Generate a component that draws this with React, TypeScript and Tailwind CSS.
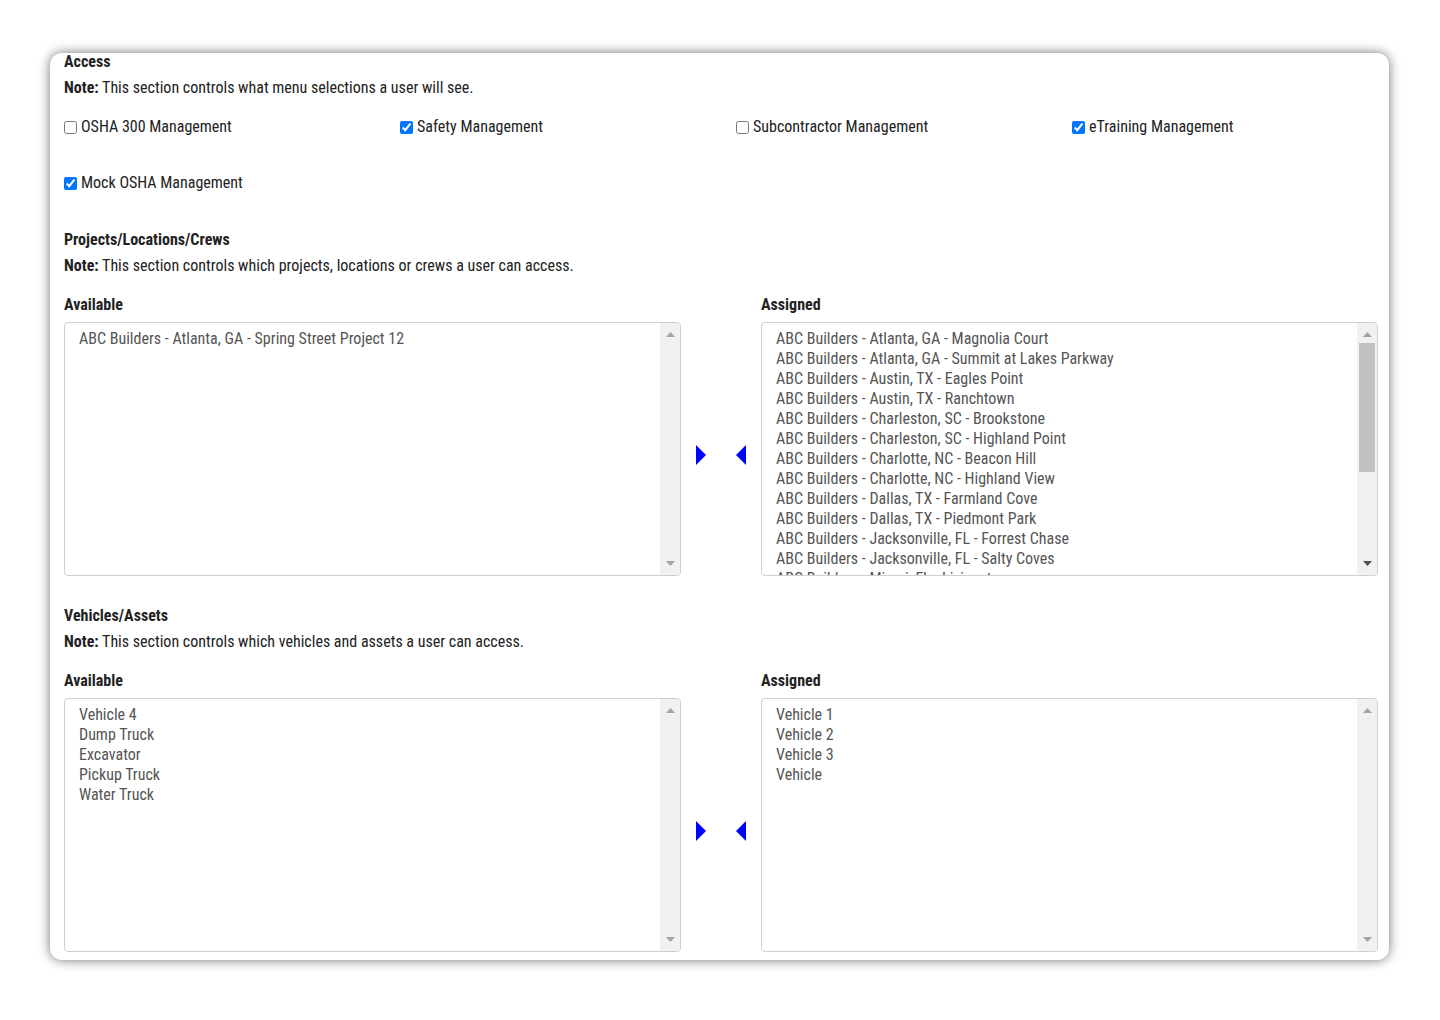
import React from "react";

const font = { fontFamily: "Roboto, 'Noto Sans', sans-serif" };

function Arrow({ dir }: { dir: "right" | "left" }) {
  return (
    <svg width="10" height="20" viewBox="0 0 10 20" className="block">
      {dir === "right" ? (
        <polygon points="0,0 10,10 0,20" fill="#0000ff" />
      ) : (
        <polygon points="10,0 0,10 10,20" fill="#0000ff" />
      )}
    </svg>
  );
}

function Scrollbar({ thumb }: { thumb: boolean }) {
  return (
    <div className="w-[20px] shrink-0 bg-[#f1f1f1] flex flex-col items-center">
      <div className="h-[20px] w-full flex items-center justify-center">
        <svg width="9" height="5" viewBox="0 0 9 5" className="mt-[2px]">
          <polygon points="0,5 4.5,0 9,5" fill="#a3a3a3" />
        </svg>
      </div>
      <div className="flex-1 w-full px-[2px]">
        {thumb && <div className="h-[129px] w-full bg-[#c1c1c1]" />}
      </div>
      <div className="h-[24px] w-full flex items-center justify-center">
        <svg width="9" height="5" viewBox="0 0 9 5">
          <polygon points="0,0 4.5,5 9,0" fill={thumb ? "#505050" : "#a3a3a3"} />
        </svg>
      </div>
    </div>
  );
}

function ListBox({ items, thumb = false }: { items: string[]; thumb?: boolean }) {
  return (
    <div className="h-[254px] border border-[#cfcfcf] rounded-[4px] bg-white flex overflow-hidden">
      <div className="flex-1 overflow-hidden pl-[14px] pt-[6px] text-[#555555]">
        {items.map((it) => (
          <div key={it} className="h-[20px] leading-[20px] whitespace-nowrap">
            {it}
          </div>
        ))}
      </div>
      <Scrollbar thumb={thumb} />
    </div>
  );
}

function Check({ label, checked }: { label: string; checked: boolean }) {
  return (
    <label className="flex items-center gap-[4px] h-[20px] leading-[20px]">
      <input
        type="checkbox"
        defaultChecked={checked}
        className="w-[13px] h-[13px] m-0"
      />
      <span>{label}</span>
    </label>
  );
}

function Transfer({
  left,
  right,
  thumb,
}: {
  left: string[];
  right: string[];
  thumb: boolean;
}) {
  return (
    <>
      <div className="grid grid-cols-[617px_80px_617px] mt-[19px] font-bold text-[#222222] leading-[20px]">
        <div>Available</div>
        <div />
        <div>Assigned</div>
      </div>
      <div className="grid grid-cols-[617px_80px_617px] mt-[7px]">
        <ListBox items={left} />
        <div className="flex items-center justify-center gap-[30px] pt-[12px]">
          <Arrow dir="right" />
          <Arrow dir="left" />
        </div>
        <ListBox items={right} thumb={thumb} />
      </div>
    </>
  );
}

export default function App() {
  const assigned = [
    "ABC Builders - Atlanta, GA - Magnolia Court",
    "ABC Builders - Atlanta, GA - Summit at Lakes Parkway",
    "ABC Builders - Austin, TX - Eagles Point",
    "ABC Builders - Austin, TX - Ranchtown",
    "ABC Builders - Charleston, SC - Brookstone",
    "ABC Builders - Charleston, SC - Highland Point",
    "ABC Builders - Charlotte, NC - Beacon Hill",
    "ABC Builders - Charlotte, NC - Highland View",
    "ABC Builders - Dallas, TX - Farmland Cove",
    "ABC Builders - Dallas, TX - Piedmont Park",
    "ABC Builders - Jacksonville, FL - Forrest Chase",
    "ABC Builders - Jacksonville, FL - Salty Coves",
    "ABC Builders - Miami, FL - Livingston",
    "ABC Builders - Miami, FL - Palm Grove",
  ];
  return (
    <div
      className="min-h-screen bg-white pt-[53px] pl-[50px] text-[16px] font-stretch-condensed text-[#222222]"
      style={font}
    >
      <div className="w-[1339px] h-[907px] rounded-[12px] bg-white shadow-[0_0_12px_rgba(0,0,0,0.55)] overflow-hidden px-[14px]">
        <div className="-mt-[1px] font-bold leading-[20px]">Access</div>
        <div className="mt-[6px] leading-[20px]">
          <b>Note:</b> This section controls what menu selections a user will see.
        </div>
        <div className="grid grid-cols-[repeat(4,336px)] gap-y-[36px] mt-[19px]">
          <Check label="OSHA 300 Management" checked={false} />
          <Check label="Safety Management" checked={true} />
          <Check label="Subcontractor Management" checked={false} />
          <Check label="eTraining Management" checked={true} />
          <Check label="Mock OSHA Management" checked={true} />
        </div>

        <div className="mt-[37px] font-bold leading-[20px]">Projects/Locations/Crews</div>
        <div className="mt-[6px] leading-[20px]">
          <b>Note:</b> This section controls which projects, locations or crews a user can access.
        </div>
        <Transfer
          left={["ABC Builders - Atlanta, GA - Spring Street Project 12"]}
          right={assigned}
          thumb={true}
        />

        <div className="mt-[30px] font-bold leading-[20px]">Vehicles/Assets</div>
        <div className="mt-[6px] leading-[20px]">
          <b>Note:</b> This section controls which vehicles and assets a user can access.
        </div>
        <Transfer
          left={["Vehicle 4", "Dump Truck", "Excavator", "Pickup Truck", "Water Truck"]}
          right={["Vehicle 1", "Vehicle 2", "Vehicle 3", "Vehicle"]}
          thumb={false}
        />
      </div>
    </div>
  );
}
